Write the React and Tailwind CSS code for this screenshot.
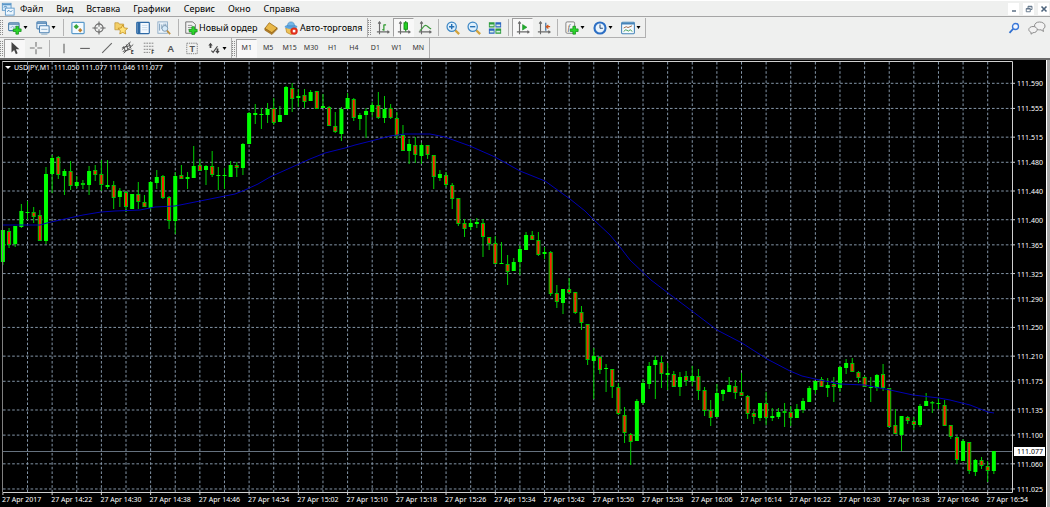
import React from 'react';
import clsx from 'clsx';

const MENU = ['Файл', 'Вид', 'Вставка', 'Графики', 'Сервис', 'Окно', 'Справка'];
const PERIODS = ['M1', 'M5', 'M15', 'M30', 'H1', 'H4', 'D1', 'W1', 'MN'];

// high, body top, body bottom, low, 1 = up / 0 = down
const CANDLES = [
  [230, 230, 262, 265, 1], [228, 231, 245, 248, 0], [226, 226, 244, 247, 1], [204, 211, 227, 228, 1], [201, 212, 213, 220, 1],
  [207, 212, 217, 223, 0], [210, 215, 241, 241, 0], [167, 174, 241, 244, 1], [155, 158, 174, 193, 1], [156, 157, 175, 179, 0],
  [169, 171, 176, 195, 1], [161, 171, 186, 190, 0], [176, 182, 186, 188, 1], [180, 183, 185, 189, 0], [166, 171, 185, 195, 1],
  [165, 170, 175, 181, 0], [160, 174, 185, 191, 0], [160, 185, 187, 189, 1], [181, 185, 198, 209, 0], [188, 191, 197, 207, 1],
  [191, 192, 207, 212, 0], [194, 194, 209, 209, 1], [182, 194, 202, 209, 0], [195, 202, 207, 207, 0], [181, 182, 208, 210, 1],
  [170, 177, 183, 189, 1], [175, 176, 198, 199, 0], [196, 197, 221, 229, 0], [172, 176, 221, 234, 1], [165, 175, 179, 179, 0],
  [172, 177, 179, 189, 1], [146, 166, 178, 178, 1], [159, 165, 171, 171, 0], [165, 166, 170, 185, 1], [151, 166, 175, 177, 0],
  [167, 175, 176, 190, 1], [168, 175, 176, 189, 1], [161, 165, 177, 177, 1], [162, 165, 168, 177, 0], [143, 144, 168, 175, 1],
  [112, 113, 144, 144, 1], [104, 113, 115, 124, 1], [108, 114, 115, 129, 1], [103, 109, 115, 123, 1], [98, 108, 123, 125, 0],
  [106, 115, 122, 122, 1], [86, 87, 115, 115, 1], [83, 88, 99, 112, 0], [89, 96, 98, 107, 1], [89, 95, 102, 108, 0],
  [90, 92, 101, 101, 1], [91, 91, 109, 109, 0], [94, 106, 108, 108, 1], [106, 107, 126, 126, 0], [112, 126, 132, 133, 0],
  [107, 109, 134, 141, 1], [93, 98, 109, 109, 1], [98, 99, 118, 121, 0], [113, 115, 119, 130, 1], [108, 111, 115, 138, 1],
  [102, 105, 112, 117, 1], [92, 105, 118, 119, 0], [96, 109, 118, 123, 1], [104, 108, 118, 119, 0], [112, 118, 136, 139, 0],
  [125, 135, 151, 151, 0], [139, 144, 151, 164, 1], [137, 145, 155, 163, 0], [143, 145, 156, 164, 1], [145, 145, 155, 159, 0],
  [155, 155, 177, 189, 0], [170, 174, 178, 181, 1], [172, 175, 185, 187, 0], [183, 185, 199, 209, 0], [198, 198, 224, 226, 0],
  [219, 223, 229, 237, 0], [219, 223, 227, 230, 1], [218, 222, 224, 228, 1], [219, 223, 237, 257, 0], [237, 237, 244, 250, 0],
  [236, 243, 264, 264, 0], [242, 263, 264, 264, 1], [255, 264, 272, 285, 0], [258, 262, 271, 271, 1], [245, 249, 262, 275, 1],
  [232, 235, 250, 250, 1], [231, 235, 240, 240, 0], [232, 240, 255, 256, 0], [247, 252, 254, 259, 1], [251, 252, 294, 296, 0],
  [285, 293, 302, 308, 0], [289, 289, 303, 314, 1], [278, 289, 293, 294, 0], [292, 292, 313, 314, 0], [306, 312, 323, 330, 0],
  [324, 324, 360, 365, 0], [348, 356, 361, 399, 1], [356, 357, 370, 374, 0], [364, 368, 369, 392, 1], [369, 369, 387, 398, 0],
  [383, 387, 414, 415, 0], [407, 415, 433, 443, 0], [433, 434, 442, 465, 0], [399, 401, 441, 441, 1], [379, 383, 403, 405, 1],
  [362, 366, 384, 389, 1], [356, 360, 365, 399, 1], [356, 362, 374, 388, 0], [363, 373, 375, 390, 1], [371, 374, 387, 387, 0],
  [372, 377, 387, 396, 1], [371, 376, 381, 386, 0], [366, 376, 381, 386, 1], [369, 376, 391, 400, 0], [387, 390, 411, 416, 0],
  [400, 410, 418, 426, 0], [384, 393, 417, 417, 1], [389, 390, 394, 401, 1], [377, 385, 392, 392, 1], [380, 386, 393, 399, 0],
  [373, 392, 396, 396, 0], [395, 396, 414, 419, 0], [411, 413, 417, 424, 0], [403, 403, 418, 421, 1], [392, 403, 418, 425, 0],
  [408, 416, 418, 421, 1], [408, 412, 417, 419, 1], [403, 411, 413, 427, 0], [406, 412, 418, 426, 0], [404, 409, 418, 418, 1],
  [398, 401, 410, 413, 1], [386, 388, 402, 402, 1], [381, 381, 390, 394, 1], [377, 379, 387, 387, 0], [378, 385, 388, 397, 1],
  [377, 384, 387, 402, 0], [366, 367, 388, 392, 1], [359, 363, 368, 374, 1], [358, 363, 372, 372, 0], [371, 372, 378, 383, 0],
  [376, 377, 387, 387, 0], [377, 387, 388, 402, 1], [374, 375, 388, 391, 1], [364, 374, 388, 391, 0], [388, 388, 427, 427, 0],
  [409, 425, 434, 434, 0], [416, 416, 435, 451, 1], [416, 417, 421, 424, 0], [417, 421, 425, 430, 0], [404, 406, 425, 427, 1],
  [393, 401, 406, 406, 1], [401, 402, 403, 413, 0], [398, 403, 404, 409, 1], [400, 405, 426, 426, 0], [425, 425, 437, 439, 0],
  [436, 437, 460, 464, 0], [439, 441, 461, 461, 1], [442, 442, 471, 474, 0], [459, 460, 472, 476, 1], [457, 460, 466, 469, 0],
  [461, 466, 471, 482, 0], [451, 451, 471, 474, 1],
];

const AVERAGE =
  '3,225 40,225 47,223 60,220 83,215 101,212 115,211 140,210 155,207 175,206 195,202 215,198 235,194 245,190 258,184 270,177 290,168 310,159 325,153 345,148 355,145 375,140 390,136 405,134 430,134 445,137 470,146 495,157 520,171 545,181 570,199 585,211 594,220 610,235 620,247 630,260 651,280 668,293 692,311 717,330 742,343 767,359 790,371 802,376 815,379 840,384 865,385 890,390 913,395 939,398 950,400 970,405 988,412 994,413';

const PRICES = [111.59, 111.555, 111.515, 111.48, 111.44, 111.4, 111.365, 111.325, 111.29, 111.25, 111.21, 111.175, 111.135, 111.1, 111.06, 111.025];
const TIMES = [
  '2017', '14:22', '14:30', '14:38', '14:46', '14:54', '15:02', '15:10', '15:18', '15:26', '15:34',
  '15:42', '15:50', '15:58', '16:06', '16:14', '16:22', '16:30', '16:38', '16:46', '16:54',
];

const STEP = 6.155;
const candleX = (i) => 2.9 + STEP * i;
const priceY = (p) => 83.3 + (111.59 - p) * 718;

const Icon = ({ children }) => (
  <svg viewBox="0 0 16 16" className="h-[14px] w-[14px] shrink-0" fill="none" aria-hidden="true">
    {children}
  </svg>
);

const Plus = ({ x = 7, y = 7 }) => (
  <path
    d={`M${x + 3} ${y}h3v3h3v3h-3v3h-3v-3h-3v-3h3z`}
    fill="#2bd52b"
    stroke="#0d8a12"
    strokeWidth="0.8"
  />
);

const Axes = () => <path d="M4 1v14M1 12.5h14M2.5 3L4 1l1.500 2M13 11l2 1.500-2 1.500" stroke="#6b6b6b" strokeWidth="1.300" />;

const icons = {
  logo: (
    <>
      <rect x="1.500" y="1.500" width="10" height="8" fill="#d9ecfa" stroke="#5a96c8" />
      <path d="M1.500 3h10" stroke="#5a96c8" strokeWidth="1.500" />
      <rect x="5" y="7" width="10" height="8" fill="#eef7fe" stroke="#5a96c8" />
      <path d="M7 11l2-1.500 2 2 2-2M3 6l2-1 2 1" stroke="#3e7fb5" />
    </>
  ),
  newChart: (
    <>
      <rect x="0.700" y="2" width="12" height="9" rx="1" fill="#e4f0fb" stroke="#4a7ea8" strokeWidth="1.200" />
      <path d="M1 3.500h11.500" stroke="#4a7ea8" strokeWidth="1.500" />
      <path d="M3 8l2-2 2 1.500 2-2" stroke="#7fa6c4" />
      <Plus x={6} y={6} />
    </>
  ),
  profiles: (
    <>
      <rect x="1" y="1" width="11" height="8" rx="1" fill="#e4f0fb" stroke="#4f83b3" strokeWidth="1.200" />
      <path d="M1 2.500h11" stroke="#4f83b3" strokeWidth="1.500" />
      <rect x="4" y="5.500" width="11" height="8" rx="1" fill="#eff7fe" stroke="#4f83b3" strokeWidth="1.200" />
      <path d="M6 9.500h7M6 15h7" stroke="#7fa6c4" />
    </>
  ),
  market: (
    <>
      <rect x="1" y="1.500" width="14" height="13" rx="1" fill="#f3faff" stroke="#5b9bcb" strokeWidth="1.400" />
      <path d="M6 3.500l3 3-3 3-3-3z" fill="#3aa73a" />
      <path d="M10.500 8l2.500 2.500-2.500 2.500L8 10.500z" fill="#c08030" />
    </>
  ),
  target: (
    <>
      <circle cx="8" cy="8" r="4.700" stroke="#666" strokeWidth="1.200" />
      <path d="M8 0.500v6M8 9.500v6M0.500 8h6M9.500 8h6" stroke="#666" strokeWidth="1.200" />
    </>
  ),
  favorites: (
    <>
      <path d="M1 2h4l1 1.500h5V10H1z" fill="#f3cf68" stroke="#bd9231" strokeWidth="0.800" />
      <path d="M10 4.500l1.700 3.400 3.800.5-2.800 2.600.7 3.800L10 13l-3.400 1.800.7-3.800-2.800-2.600 3.800-.5z" fill="#ffe27a" stroke="#c08c1c" strokeWidth="0.900" />
    </>
  ),
  terminal: (
    <>
      <rect x="0.800" y="1.500" width="14.400" height="13" rx="1" fill="#f3f9ff" stroke="#2e6aa6" strokeWidth="1.300" />
      <rect x="1.500" y="2" width="3.500" height="12" fill="#2e6aa6" />
      <path d="M7 5h6M7 7.500h6M7 10h6" stroke="#c5d7e8" />
    </>
  ),
  tester: (
    <>
      <rect x="1" y="1" width="11" height="13" fill="#eef5fb" stroke="#8aa9c4" />
      <path d="M3 3v8M5.500 4v5M8 3v6M10 3v4" stroke="#6f93b3" />
      <circle cx="9" cy="8.500" r="3.300" fill="#d6ebfa" stroke="#7894ab" />
      <path d="M11.500 11l3.500 4" stroke="#c09140" strokeWidth="2" />
    </>
  ),
  order: (
    <>
      <path d="M2 1h8l3 3v10H2z" fill="#f3f3f3" stroke="#666" />
      <path d="M4.500 5h5M4.500 7.500h5M4.500 10h3" stroke="#888" />
      <Plus x={6} y={6.500} />
    </>
  ),
  book: (
    <>
      <path d="M6 2l9 6-6 5.500-8-5z" fill="#e8b849" stroke="#9a6a12" strokeWidth="0.900" />
      <path d="M1 8.500v2l8 5 6-6V8l-6 5.500z" fill="#b9822a" stroke="#8d5f12" strokeWidth="0.700" />
    </>
  ),
  auto: (
    <>
      <path d="M2 8l6-2 6 2-1 5-5 2.500L3 13z" fill="#eec35a" stroke="#b98524" strokeWidth="0.800" />
      <ellipse cx="8" cy="6.500" rx="7.300" ry="2.500" fill="#5ba3dd" />
      <path d="M4 5.500C4 2 6 1 8 1s4 1 4 4.500z" fill="#74b8ea" stroke="#3e7eb6" strokeWidth="0.600" />
      <circle cx="11.500" cy="11.500" r="4.200" fill="#e02d18" />
      <rect x="10" y="10" width="3" height="3" fill="#fff" />
    </>
  ),
  bars: (
    <>
      <Axes />
      <path d="M7 10h2M9 4v7M9 4.500h2.500" stroke="#2d9a2d" strokeWidth="1.400" />
    </>
  ),
  candles: (
    <>
      <Axes />
      <path d="M10 0v12" stroke="#128a12" strokeWidth="1.200" />
      <rect x="8" y="2" width="4" height="7.500" fill="#22d022" stroke="#128a12" />
    </>
  ),
  line: (
    <>
      <Axes />
      <path d="M2 11c3-1 4-6 6.500-6S12 8 15 9" stroke="#3c9a3c" strokeWidth="1.400" />
    </>
  ),
  zoomIn: (
    <>
      <path d="M10 10l5 5" stroke="#d3a33c" strokeWidth="2.600" />
      <circle cx="6.500" cy="6.500" r="5.300" fill="#dff0fc" stroke="#3d87c4" strokeWidth="1.400" />
      <path d="M3.500 6.500h6M6.500 3.500v6" stroke="#2670b4" strokeWidth="1.600" />
    </>
  ),
  zoomOut: (
    <>
      <path d="M10 10l5 5" stroke="#d3a33c" strokeWidth="2.600" />
      <circle cx="6.500" cy="6.500" r="5.300" fill="#dff0fc" stroke="#3d87c4" strokeWidth="1.400" />
      <path d="M3.500 6.500h6" stroke="#2670b4" strokeWidth="1.600" />
    </>
  ),
  tile: (
    <>
      <path d="M1 1.500h6.500v6H1zM8.500 8.500H15v6H8.500z" fill="#2c9c3c" />
      <path d="M8.500 1.500H15v6H8.500zM1 8.500h6.500v6H1z" fill="#2b66c0" />
      <path d="M2 4h4.500v2H2zM9.500 4H14v2H9.500zM2 11h4.500v2H2zM9.500 11H14v2H9.500z" fill="#d8f0e4" />
    </>
  ),
  scroll: (
    <>
      <Axes />
      <path d="M7.500 4l5 3.200-5 3.200z" fill="#1fae2c" stroke="#128a1c" strokeWidth="0.600" />
    </>
  ),
  shift: (
    <>
      <Axes />
      <path d="M10 2v9" stroke="#4c7aa6" strokeWidth="1.500" />
      <path d="M15 6.500h-4M13 4.500l-2.500 2L13 8.500" stroke="#d2591e" strokeWidth="1.300" />
    </>
  ),
  indicators: (
    <>
      <rect x="1" y="1" width="10" height="13" rx="1.500" fill="#f6f6f6" stroke="#777" />
      <text x="3" y="10" fontSize="9" fontStyle="italic" fontFamily="Liberation Serif, serif" fill="#444">f</text>
      <Plus x={6} y={6} />
    </>
  ),
  clock: (
    <>
      <circle cx="8" cy="8" r="6.300" fill="#eaf4fd" stroke="#2c6fc4" strokeWidth="2.400" />
      <path d="M8 4v4.300h3.300" stroke="#23436b" strokeWidth="1.100" />
    </>
  ),
  template: (
    <>
      <rect x="0.700" y="1.500" width="14.600" height="13" rx="1" fill="#f5faff" stroke="#4684b8" strokeWidth="1.200" />
      <path d="M1 3h14" stroke="#4684b8" strokeWidth="2" />
      <path d="M3 8l3-1.500 2 1 4.500-2" stroke="#9a5b36" />
      <path d="M3 12l2.500-2 3 1.500 2-1.500 2.500 2" stroke="#2e9440" />
    </>
  ),
  cursor: <path d="M4 1v12l3-2.800 2 4.800 2-1-2-4.600h4z" fill="#444" />,
  cross: <path d="M8 1v5.500M8 9.500V15M1 8h5.500M9.500 8H15" stroke="#777" strokeWidth="1.300" />,
  vline: <path d="M8 3v11" stroke="#666" strokeWidth="1.300" />,
  hline: <path d="M2.500 8.500h11" stroke="#666" strokeWidth="1.300" />,
  trend: <path d="M2.500 13.500l11-11" stroke="#666" strokeWidth="1.200" />,
  channel: (
    <>
      <path d="M1 10l10-9M3 14L14 4M3 6l2 6M6 4l2 6M9 2l2 6M1 8l10-3M2 12l10-3" stroke="#555" strokeWidth="1.100" />
      <text x="11" y="15" fontSize="6" fontWeight="700" fontFamily="Noto Sans, sans-serif" fill="#333">E</text>
    </>
  ),
  fibo: (
    <>
      <path d="M2 2.500h12M2 6h12M2 9.500h12M2 13h7" stroke="#777" strokeDasharray="2 1" />
      <text x="10.500" y="15" fontSize="6" fontWeight="700" fontFamily="Noto Sans, sans-serif" fill="#333">F</text>
    </>
  ),
  text: <text x="4" y="13" fontSize="11" fontWeight="600" fontFamily="Noto Sans, sans-serif" fill="#555">A</text>,
  label: (
    <>
      <rect x="2" y="2.500" width="12" height="12" stroke="#777" strokeDasharray="1.500 1" />
      <text x="5" y="12.500" fontSize="11" fontWeight="600" fontFamily="Noto Sans, sans-serif" fill="#555">T</text>
    </>
  ),
  arrows: (
    <>
      <path d="M4 2l2.500 3H5v3H3V5H1.500zM12 14.500L9.500 11.500H11v-3h2v3h1.500z" fill="#444" />
      <path d="M5 11l2 2 5-7" stroke="#444" strokeWidth="1.300" />
    </>
  ),
  find: (
    <>
      <path d="M7 9l-5 5.500" stroke="#2f6fd0" strokeWidth="2.400" />
      <circle cx="10" cy="6" r="4" fill="#f4f8ff" stroke="#3a78d8" strokeWidth="1.800" />
    </>
  ),
  minimize: <path d="M4 12h8" stroke="#5b6f84" strokeWidth="3" />,
  restore: <path d="M2.500 7h8v6.500h-8zM2.500 8h8M6 6V2.500h8V9h-3M6 3.500h8" stroke="#5b6f84" strokeWidth="1.800" />,
  close: <path d="M3 3l10 10M13 3L3 13" stroke="#4d647c" strokeWidth="3.200" />,
};

const ToolButton = ({ name, label, pressed, caret }) => (
  <button
    aria-label={label}
    aria-pressed={pressed}
    className={clsx(
      'flex h-[19px] shrink-0 items-center border',
      caret ? 'w-7 justify-start gap-px pl-[3px]' : 'w-[21px] justify-center',
      pressed ? 'border-transparent border-t-[#a0a0a0] border-l-[#a0a0a0] bg-[#f8f8f8]' : 'border-transparent'
    )}
  >
    <Icon>{icons[name]}</Icon>
    {caret && (
      <svg viewBox="0 0 4 3" className="h-[3px] w-[5px] shrink-0" aria-hidden="true">
        <path d="M0 0h4L2 3z" fill="#000" />
      </svg>
    )}
  </button>
);

const Separator = () => <span className="mx-[3px] h-[17px] w-px shrink-0 bg-[#b4b4b4]" />;
const Grip = () => <span className="mr-px h-[15px] w-[3px] shrink-0 border-x border-dotted border-[#8c8c8c]" />;

const Toolbar = ({ label, underline, children }) => (
  <div
    role="toolbar"
    aria-label={label}
    className={clsx('flex h-5 shrink-0 items-center border-r border-[#b0b0b0]', underline && 'border-b')}
  >
    <Grip />
    {children}
  </div>
);

const Chart = () => (
  <svg
    viewBox="0 60 1046 447"
    className="block h-auto min-w-0 flex-1 bg-black"
    role="img"
    aria-label="USDJPY, M1"
    fontFamily="Noto Sans, DejaVu Sans, sans-serif"
    fontSize="7"
    fill="#fff"
  >
    <g stroke="#8496a8" strokeDasharray="2.600 2" strokeWidth="1">
      {PRICES.map((p) => (
        <line key={p} x1="3" x2="1012" y1={priceY(p)} y2={priceY(p)} />
      ))}
      {Array.from({ length: 40 }, (_, k) => (
        <line key={k} y1="62" y2="492" x1={candleX(4 * k + 4)} x2={candleX(4 * k + 4)} />
      ))}
    </g>
    <line x1="3" x2="1012" y1="451.500" y2="451.500" stroke="#66727f" />

    {CANDLES.map(([high, top, bottom, low, up], i) => (
      <g key={i}>
        <line x1={candleX(i)} x2={candleX(i)} y1={high} y2={low} stroke="#00d000" />
        {up ? (
          <rect x={candleX(i) - 2} y={top} width="4" height={bottom - top} fill="#00ff00" />
        ) : (
          <rect x={candleX(i) - 1.5} y={top + 0.5} width="3" height={Math.max(bottom - top - 1, 0.5)} fill="#ff2000" stroke="#00c800" />
        )}
      </g>
    ))}
    <polyline points={AVERAGE} fill="none" stroke="#0000b4" />

    <path d="M2.500 492V61.500H1012.500V492.500H2.500" fill="none" stroke="#d0d0d0" />
    <path d="M2.500 62v430" stroke="#808080" />

    {PRICES.map((p) => (
      <g key={p}>
        <line x1="1013" x2="1015" y1={priceY(p)} y2={priceY(p)} stroke="#d0d0d0" />
        <text x="1017" y={priceY(p) + 3}>{p.toFixed(3)}</text>
      </g>
    ))}
    <rect x="1014" y="447" width="31" height="9" />
    <text x="1017" y="454" fill="#000">111.077</text>

    {TIMES.map((t, k) => (
      <g key={t}>
        <line x1={candleX(8 * k)} x2={candleX(8 * k)} y1="493" y2="495" stroke="#d0d0d0" />
        <text x={candleX(8 * k) - 1} y="502">27 Apr {t}</text>
      </g>
    ))}

    <path d="M5 66h6l-3 3z" />
    <text x="14" y="70">{'USDJPY,M1\u00a0\u00a0111.050 111.077 111.046 111.077'}</text>
  </svg>
);

export default function App() {
  return (
    <div className="min-h-full w-full bg-[#eff0ef] font-['Noto_Sans',sans-serif] text-[9px] text-black">
      <header className="flex h-[17px] items-center border-t border-b border-t-white border-b-[#a5a5a5] pl-px">
        <Icon>{icons.logo}</Icon>
        <nav className="ml-[5px] flex flex-1 gap-[13px]">
          {MENU.map((item) => (
            <a key={item} href="#" className="leading-4">{item}</a>
          ))}
        </nav>
        <div className="flex gap-1 pr-px">
          {[['minimize', 'Свернуть'], ['restore', 'Восстановить'], ['close', 'Закрыть']].map(([name, label]) => (
            <button key={name} aria-label={label} className="flex h-3 w-[11px] items-center justify-center bg-white">
              <svg viewBox="0 0 16 16" className="h-2 w-2" fill="none" aria-hidden="true">{icons[name]}</svg>
            </button>
          ))}
        </div>
      </header>

      <div className="flex items-center pt-px">
        <Toolbar label="Стандартная" underline>
          <ToolButton name="newChart" label="Новый график" caret />
          <ToolButton name="profiles" label="Профили" caret />
          <Separator />
          <div className="grid w-[108px] shrink-0 grid-cols-5 justify-items-center">
            <ToolButton name="market" label="Обзор рынка" />
            <ToolButton name="target" label="Окно данных" />
            <ToolButton name="favorites" label="Навигатор" />
            <ToolButton name="terminal" label="Терминал" />
            <ToolButton name="tester" label="Тестер стратегий" />
          </div>
          <Separator />
          <button className="flex w-[78px] shrink-0 items-center gap-px pl-[2px] whitespace-nowrap">
            <Icon>{icons.order}</Icon>
            Новый ордер
          </button>
          <ToolButton name="book" label="MetaEditor" />
          <button className="flex w-[86px] shrink-0 items-center gap-[2px] pl-[3px] whitespace-nowrap">
            <Icon>{icons.auto}</Icon>
            Авто-торговля
          </button>
        </Toolbar>
        <Toolbar label="Графики" underline>
          <ToolButton name="bars" label="Бары" />
          <ToolButton name="candles" label="Свечи" pressed />
          <ToolButton name="line" label="Линия" />
          <Separator />
          <ToolButton name="zoomIn" label="Увеличить" />
          <ToolButton name="zoomOut" label="Уменьшить" />
          <ToolButton name="tile" label="Окна мозаикой" />
          <Separator />
          <ToolButton name="scroll" label="Автопрокрутка" pressed />
          <ToolButton name="shift" label="Сдвиг графика" />
          <Separator />
          <ToolButton name="indicators" label="Индикаторы" caret />
          <ToolButton name="clock" label="Периоды" caret />
          <ToolButton name="template" label="Шаблоны" caret />
        </Toolbar>
        <div className="ml-auto flex items-center gap-2 pr-1">
          <button aria-label="Поиск">
            <svg viewBox="0 0 16 16" className="h-3 w-3" fill="none" aria-hidden="true">{icons.find}</svg>
          </button>
          <button aria-label="Чат">
            <svg viewBox="0 0 18 14" className="h-[14px] w-[18px]" fill="#f2f2f2" stroke="#8d8d8d" aria-hidden="true">
              <path d="M11.500 1c3 0 5.500 1.600 5.500 4 0 1.500-.8 2.600-2 3.200l.5 2.300-2.500-1.700C9 9.200 6.500 7.500 6.500 5s2-4 5-4z" />
              <path d="M5 5.500c2.300 0 4.200 1.300 4.200 3.100S7.500 11.700 5 11.700l-2 1.500.1-1.900C1.700 10.800.8 9.800.8 8.600.8 6.800 2.700 5.500 5 5.500z" />
            </svg>
          </button>
        </div>
      </div>

      <div className="flex items-center">
        <Toolbar label="Графические инструменты">
          <ToolButton name="cursor" label="Курсор" pressed />
          <ToolButton name="cross" label="Перекрестие" />
          <Separator />
          <div className="grid w-[150px] shrink-0 grid-cols-7 justify-items-center">
            <ToolButton name="vline" label="Вертикальная линия" />
            <ToolButton name="hline" label="Горизонтальная линия" />
            <ToolButton name="trend" label="Трендовая линия" />
            <ToolButton name="channel" label="Канал" />
            <ToolButton name="fibo" label="Фибоначчи" />
            <ToolButton name="text" label="Текст" />
            <ToolButton name="label" label="Текстовая метка" />
          </div>
          <ToolButton name="arrows" label="Стрелки" caret />
        </Toolbar>
        <Toolbar label="Периоды">
          <div className="grid w-[193px] grid-cols-9 text-[7px] text-[#333]">
            {PERIODS.map((p, i) => (
              <button
                key={p}
                aria-pressed={i === 0}
                className={clsx(
                  'h-[19px] border border-transparent pt-px text-center',
                  i === 0 && 'border-t-[#a0a0a0] border-l-[#a0a0a0] bg-[#f8f8f8]'
                )}
              >
                {p}
              </button>
            ))}
          </div>
        </Toolbar>
      </div>

      <main className="flex border-t-2 border-[#6a6a6a]">
        <Chart />
        <div className="w-1 border-l border-white bg-[#a8a8a8]" />
      </main>
    </div>
  );
}
